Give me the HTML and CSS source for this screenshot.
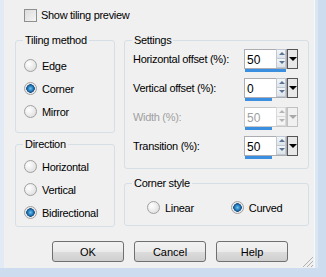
FILE: index.html
```html
<!DOCTYPE html>
<html lang="en">
<head>
    <meta charset="UTF-8">
    <title>Tiling</title>
    <link rel="stylesheet" href="styles.css">
</head>
<body>
    <div class="window">
        <label class="check-row">
            <span class="checkbox"></span>
            Show tiling preview
        </label>

        <div class="columns">
            <div class="col-left">
                <fieldset class="group tiling">
                    <legend>Tiling method</legend>
                    <div class="radio-row"><span class="radio"></span>Edge</div>
                    <div class="radio-row"><span class="radio on"></span>Corner</div>
                    <div class="radio-row"><span class="radio"></span>Mirror</div>
                </fieldset>
                <fieldset class="group direction">
                    <legend>Direction</legend>
                    <div class="radio-row"><span class="radio"></span>Horizontal</div>
                    <div class="radio-row"><span class="radio"></span>Vertical</div>
                    <div class="radio-row"><span class="radio on"></span>Bidirectional</div>
                </fieldset>
            </div>
            <div class="col-right">
                <fieldset class="group settings">
                    <legend>Settings</legend>
                    <div class="field-row">
                        <span class="field-label">Horizontal offset (%):</span>
                        <div class="spin">
                            <div class="spin-box">
                                <span class="spin-value">50</span>
                                <span class="arrows"><span class="up"></span><span class="down"></span></span>
                            </div>
                            <span class="drop"></span>
                            <span class="bar" style="width: 41px"></span>
                        </div>
                    </div>
                    <div class="field-row">
                        <span class="field-label">Vertical offset (%):</span>
                        <div class="spin">
                            <div class="spin-box">
                                <span class="spin-value">0</span>
                                <span class="arrows"><span class="up"></span><span class="down"></span></span>
                            </div>
                            <span class="drop"></span>
                            <span class="bar" style="width: 27px"></span>
                        </div>
                    </div>
                    <div class="field-row disabled">
                        <span class="field-label">Width (%):</span>
                        <div class="spin">
                            <div class="spin-box">
                                <span class="spin-value">50</span>
                                <span class="arrows"><span class="up"></span><span class="down"></span></span>
                            </div>
                            <span class="drop"></span>
                            <span class="bar" style="width: 27px"></span>
                        </div>
                    </div>
                    <div class="field-row">
                        <span class="field-label">Transition (%):</span>
                        <div class="spin">
                            <div class="spin-box">
                                <span class="spin-value">50</span>
                                <span class="arrows"><span class="up"></span><span class="down"></span></span>
                            </div>
                            <span class="drop"></span>
                            <span class="bar" style="width: 27px"></span>
                        </div>
                    </div>
                </fieldset>
                <fieldset class="group corner">
                    <legend>Corner style</legend>
                    <div class="corner-row">
                        <div class="radio-row"><span class="radio"></span>Linear</div>
                        <div class="radio-row"><span class="radio on"></span>Curved</div>
                    </div>
                </fieldset>
            </div>
        </div>

        <div class="buttons">
            <button>OK</button>
            <button>Cancel</button>
            <button>Help</button>
        </div>
        <span class="grip"></span>
    </div>
</body>
</html>
```

FILE: styles.css
```css
body {
    margin: 0;
    background: #cddcef;
    font-family: "Liberation Sans", Arial, sans-serif;
    font-size: 11px;
    letter-spacing: -0.3px;
    color: #000;
    width: 326px;
    height: 277px;
    overflow: hidden;
}
.window {
    position: relative;
    margin-left: 4px;
    width: 310px;
    height: 268px;
    background: #f0f0f0;
    box-shadow: -4px 0 0 #e2eaf5, 1px 0 0 #f6f9fc, 4px 0 0 #dbe6f3;
    box-sizing: border-box;
    padding: 8px 0 0 11px;
}
.check-row {
    display: flex;
    align-items: center;
    gap: 4px;
    margin-left: 9px;
    height: 14px;
}
.checkbox {
    width: 11px;
    height: 11px;
    border: 1px solid #8e8f8f;
    background: linear-gradient(135deg, #dcdcdc, #f4f4f4);
}
.columns {
    display: flex;
    gap: 9px;
    margin-top: 11px;
}
.col-left {
    width: 100px;
    display: flex;
    flex-direction: column;
    gap: 4px;
}
.col-right {
    width: 185px;
    display: flex;
    flex-direction: column;
    gap: 7px;
}
.group {
    margin: 0;
    border: 1px solid #d5dfe5;
    border-radius: 3px;
    padding: 0 0 0 8px;
    box-sizing: border-box;
}
.group legend {
    padding: 0 2px;
    margin-left: -1px;
    line-height: 14px;
}
.tiling {
    height: 100px;
    padding-top: 7px;
}
.direction {
    height: 90px;
    padding-top: 4px;
}
.radio-row {
    display: flex;
    align-items: center;
    gap: 5px;
    height: 23px;
}
.radio {
    width: 11px;
    height: 11px;
    border: 1px solid #a0a0a0;
    border-radius: 50%;
    background: radial-gradient(circle at 35% 35%, #ffffff, #d8d8d8);
    box-sizing: content-box;
}
.radio.on {
    background: radial-gradient(circle, #6cc6f0 0, #1d6fb0 3px, #1a4f82 4px, #e6e6e6 4.5px, #f6f6f6 6px);
}
.settings {
    height: 136px;
    padding-top: 2px;
}
.field-row {
    display: flex;
    align-items: flex-start;
    justify-content: space-between;
    height: 29px;
    padding-right: 10px;
}
.field-label {
    margin-top: 4px;
}
.spin {
    position: relative;
    display: flex;
    width: 54px;
    height: 20px;
}
.spin-box {
    display: flex;
    width: 43px;
    height: 20px;
    border: 1px solid #abadb3;
    background: #fff;
    box-sizing: border-box;
}
.spin-value {
    flex: 1;
    padding: 3px 0 0 2px;
    font-size: 12px;
    letter-spacing: 0;
}
.arrows {
    display: flex;
    flex-direction: column;
    width: 10px;
}
.arrows span {
    flex: 1;
    position: relative;
    background: linear-gradient(#f4f6f8, #dde3ea);
    border: 1px solid #c0c8d2;
    margin-top: -1px;
}
.arrows .up::after,
.arrows .down::after {
    content: "";
    position: absolute;
    left: 2px;
    top: 2px;
    border-left: 3px solid transparent;
    border-right: 3px solid transparent;
}
.arrows .up::after {
    border-bottom: 3px solid #5a7392;
}
.arrows .down::after {
    border-top: 3px solid #5a7392;
}
.drop {
    position: relative;
    width: 11px;
    height: 20px;
    border: 1px solid #555;
    background: #e8e8e8;
    box-sizing: border-box;
}
.drop::after {
    content: "";
    position: absolute;
    left: 1px;
    top: 7px;
    border-left: 4px solid transparent;
    border-right: 4px solid transparent;
    border-top: 4px solid #000;
}
.bar {
    position: absolute;
    left: 1px;
    top: 20px;
    height: 3px;
    background: #3b8fe0;
}
.disabled .field-label,
.disabled .spin-value {
    color: #a0a0a0;
}
.disabled .arrows span {
    background: #f4f4f4;
    border-color: #dadada;
}
.disabled .arrows .up::after {
    border-bottom-color: #b4b4b4;
}
.disabled .arrows .down::after {
    border-top-color: #b4b4b4;
}
.disabled .spin-box {
    border-color: #c8c8c8;
}
.disabled .drop {
    border-color: #c0c0c0;
    background: #f0f0f0;
}
.disabled .drop::after {
    border-top-color: #a8a8a8;
}
.corner {
    height: 50px;
    padding-top: 6px;
}
.corner-row {
    display: flex;
    gap: 37px;
    margin-left: 14px;
}
.buttons {
    display: flex;
    gap: 10px;
    margin: 14px 0 0 37px;
}
button {
    width: 72px;
    height: 21px;
    padding: 0;
    border: 1px solid #707070;
    border-radius: 3px;
    background: linear-gradient(#f2f2f2 0, #ebebeb 50%, #dddddd 51%, #cfcfcf 100%);
    font-family: "Liberation Sans", Arial, sans-serif;
    font-size: 11px;
    color: #000;
}
.grip {
    position: absolute;
    right: 1px;
    bottom: 1px;
    width: 12px;
    height: 12px;
    background: linear-gradient(135deg, transparent 0 55%, #b0b0b0 55% 62%, transparent 62% 72%, #b0b0b0 72% 79%, transparent 79% 88%, #b0b0b0 88% 95%, transparent 95%);
}
```
